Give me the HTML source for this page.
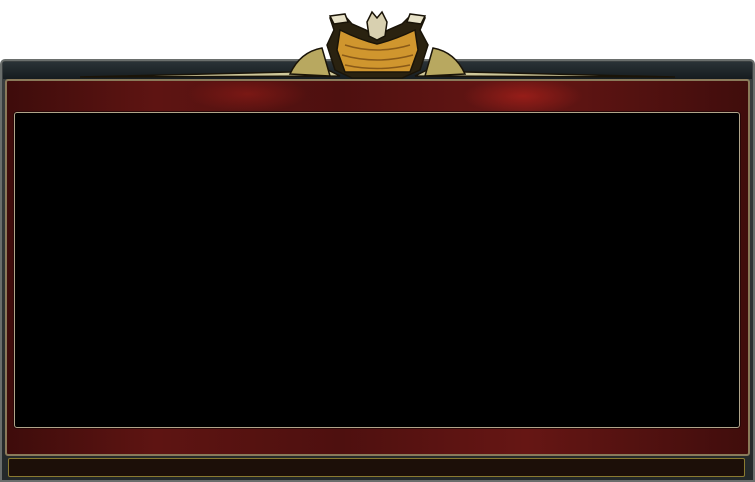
<!DOCTYPE html>
<html><head><style>
html,body{margin:0;padding:0;background:#fff;width:755px;height:482px;overflow:hidden;position:relative}
div{position:absolute;box-sizing:border-box}
</style></head><body>
<div style="left:0;top:59px;width:755px;height:423px;background:linear-gradient(#3a3f40,#24292a);border:2px solid #6a6e6c;border-radius:5px 5px 0 0"></div>
<div style="left:3px;top:62px;width:749px;height:17px;background:linear-gradient(#2a3236,#161c1f)"></div>
<div style="left:5px;top:79px;width:745px;height:377px;background:linear-gradient(90deg,#3e0c0b,#5e1412 20%,#4e100f 45%,#661614 70%,#400d0c);border:2px solid #8a7a5a;border-radius:3px"></div>
<div style="left:8px;top:82px;width:739px;height:30px;background:radial-gradient(ellipse 60px 18px at 515px 14px,rgba(190,35,28,.55),transparent),radial-gradient(ellipse 60px 18px at 240px 12px,rgba(190,35,28,.35),transparent)"></div>
<div style="left:14px;top:112px;width:726px;height:316px;background:#000;border:1px solid #b0a58a;border-radius:3px;box-shadow:0 0 0 1px #2a0808"></div>
<div style="left:8px;top:458px;width:737px;height:19px;background:#1c0f08;border:1px solid #8a7a30;border-radius:2px"></div>
<svg style="position:absolute;left:0;top:0" width="755" height="90">
<g stroke="#1a1408" stroke-width="1.5">
<path d="M80 77 L290 72 L320 66 L340 76 Z" fill="#cfc89a"/>
<path d="M675 77 L465 72 L435 66 L415 76 Z" fill="#cfc89a"/>
<path d="M290 74 Q300 52 322 48 L330 76 Z" fill="#b8a860"/>
<path d="M465 74 Q455 52 433 48 L425 76 Z" fill="#b8a860"/>
<path d="M330 18 L345 16 L352 24 L366 30 L377 38 L388 30 L402 24 L410 16 L425 18 L420 30 L428 45 L420 70 L402 78 L352 78 L335 70 L327 45 L334 30 Z" fill="#2a2210"/>
<path d="M340 30 Q360 40 377 44 Q394 40 415 30 L418 50 L410 72 L345 72 L337 50 Z" fill="#d0962e"/>
<path d="M345 45 Q377 55 410 45 M342 55 Q377 65 413 55 M345 65 Q377 72 410 65" stroke="#8a5a18" fill="none"/>
<path d="M367 22 L372 12 L377 18 L382 12 L387 22 L385 36 L377 40 L369 36 Z" fill="#d8d0b0"/>
<path d="M330 16 L345 14 L348 22 L334 24 Z M425 16 L410 14 L407 22 L421 24 Z" fill="#e8e2c8"/>
</g>
</svg>
</body></html>
